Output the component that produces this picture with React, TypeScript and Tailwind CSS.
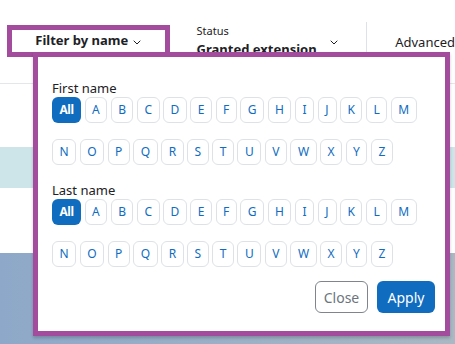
import React from "react";

const LETTERS1 = ["A","B","C","D","E","F","G","H","I","J","K","L","M"];
const LETTERS2 = ["N","O","P","Q","R","S","T","U","V","W","X","Y","Z"];

function Chevron({ className = "" }: { className?: string }) {
  return (
    <svg className={className} width="8" height="5" viewBox="0 0 8 5" fill="none">
      <path d="M0.7 0.7 L4 4 L7.3 0.7" stroke="#1d2125" strokeWidth="1" />
    </svg>
  );
}

function LetterBtn({ l }: { l: string }) {
  return (
    <div className="h-[26px] min-w-[19px] px-[6.5px] flex items-center justify-center rounded-[6px] border border-[#dee2e6] bg-white text-[12px] text-[#0f6cbf]">
      {l}
    </div>
  );
}

function AllBtn() {
  return (
    <div className="h-[26px] w-[29px] flex items-center justify-center rounded-[6px] bg-[#0f6cbf] text-[12px] font-bold text-white tracking-[-0.5px]">
      All
    </div>
  );
}

function Group({ label, first }: { label: string; first?: boolean }) {
  return (
    <div className={first ? "" : "mt-[16px]"}>
      <div className="h-[18px] text-[13px] leading-[18px] text-[#1d2125]">{label}</div>
      <div className="flex gap-[3.5px]">
        <AllBtn />
        {LETTERS1.map((l) => (
          <LetterBtn key={l} l={l} />
        ))}
      </div>
      <div className="flex gap-[3.5px] mt-[16px]">
        {LETTERS2.map((l) => (
          <LetterBtn key={l} l={l} />
        ))}
      </div>
    </div>
  );
}

export default function App() {
  return (
    <div
      className="relative w-[455px] h-[344px] overflow-hidden bg-white text-[#1d2125]"
      style={{ fontFamily: '"Noto Sans", "Open Sans", sans-serif' }}
    >
      {/* header */}
      <div className="h-[84px] border-b border-[#e4e6e8] flex items-start">
        <div className="ml-[7px] mt-[25px] w-[163px] h-[32px] border-[5px] border-[#a34c9d] flex items-center justify-center gap-[5px]">
          <span className="text-[13px] font-bold">Filter by name</span>
          <Chevron className="mt-[2px]" />
        </div>
        <div className="ml-[27px] mt-[24px] w-[145px] flex">
          <div className="flex-1">
            <div className="text-[11px] leading-[14px]">Status</div>
            <div className="text-[13px] leading-[18px] font-bold mt-[2px]">Granted extension</div>
          </div>
          <Chevron className="mt-[16px] mr-[3px]" />
        </div>
        <div className="w-px h-[32px] mt-[22px] bg-[#dee2e6] ml-[25px]" />
        <div className="ml-[28px] mt-[33px] text-[13px] leading-[18px]">Advanced</div>
      </div>
      <div className="h-[63px]" />
      <div className="h-[41px] bg-[#cde5e8]" />
      <div className="h-[65px]" />
      <div className="h-[91px] bg-gradient-to-r from-[#8ea8c9] to-[#a9b8c3]" />

      {/* dropdown panel */}
      <div className="absolute left-[33px] top-[52px] w-[417px] h-[284px] border-[5px] border-[#a34c9d] bg-white shadow-[0_2px_3px_rgba(0,0,0,0.2)] pl-[14px] pr-[10px] pt-[22px]">
        <Group label="First name" first />
        <Group label="Last name" />
        <div className="flex justify-end gap-[9px] mt-[14px]">
          <div className="w-[53px] h-[32px] rounded-[6px] border border-[#7e858c] flex items-center justify-center text-[14px] text-[#6c757d]">
            Close
          </div>
          <div className="w-[58px] h-[32px] rounded-[6px] bg-[#0f6cbf] flex items-center justify-center text-[14px] text-white">
            Apply
          </div>
        </div>
      </div>
    </div>
  );
}
